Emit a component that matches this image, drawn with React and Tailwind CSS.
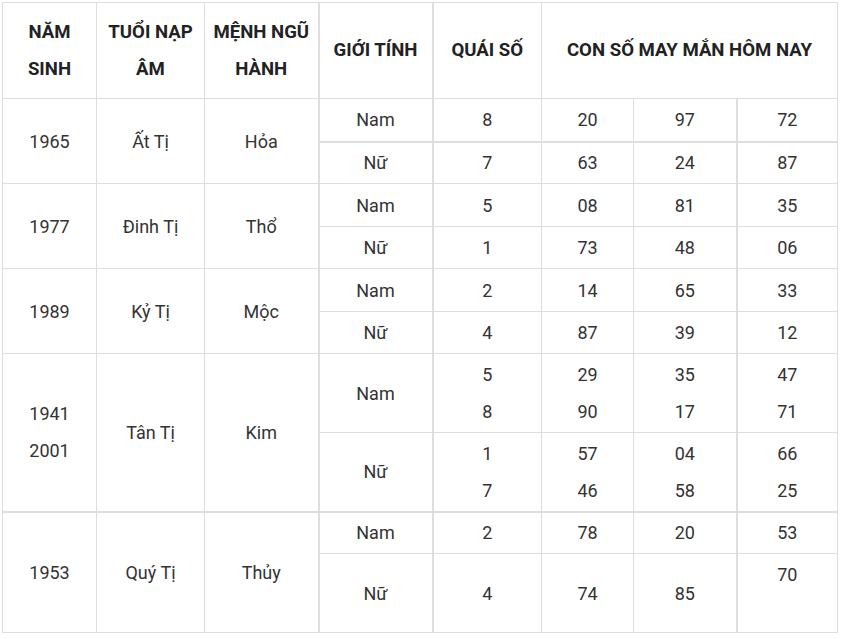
import React from 'react';

const rows = [
  { year: ['1965'], tuoi: 'Ất Tị', menh: 'Hỏa', sub: [
    { g: 'Nam', q: ['8'], n: [['20'], ['97'], ['72']], h: 'h-[43px]', thick: true },
    { g: 'Nữ', q: ['7'], n: [['63'], ['24'], ['87']], h: 'h-[42px]' },
  ] },
  { year: ['1977'], tuoi: 'Đinh Tị', menh: 'Thổ', sub: [
    { g: 'Nam', q: ['5'], n: [['08'], ['81'], ['35']], h: 'h-[43px]' },
    { g: 'Nữ', q: ['1'], n: [['73'], ['48'], ['06']], h: 'h-[42px]' },
  ] },
  { year: ['1989'], tuoi: 'Kỷ Tị', menh: 'Mộc', sub: [
    { g: 'Nam', q: ['2'], n: [['14'], ['65'], ['33']], h: 'h-[43px]' },
    { g: 'Nữ', q: ['4'], n: [['87'], ['39'], ['12']], h: 'h-[42px]' },
  ] },
  { year: ['1941', '2001'], tuoi: 'Tân Tị', menh: 'Kim', thickBottom: true, sub: [
    { g: 'Nam', q: ['5', '8'], n: [['29', '90'], ['35', '17'], ['47', '71']], h: 'h-[79px]' },
    { g: 'Nữ', q: ['1', '7'], n: [['57', '46'], ['04', '58'], ['66', '25']], h: 'h-[79px]' },
  ] },
  { year: ['1953'], tuoi: 'Quý Tị', menh: 'Thủy', sub: [
    { g: 'Nam', q: ['2'], n: [['78'], ['20'], ['53']], h: 'h-[42px]' },
    { g: 'Nữ', q: ['4'], n: [['74'], ['85'], ['70', '\u00a0']], h: 'h-[79px]' },
  ] },
];

const Lines = ({ items }) => (
  <>
    {items.map((t, i) => (
      <React.Fragment key={i}>
        {i > 0 && <br />}
        {t}
      </React.Fragment>
    ))}
  </>
);

const td = 'border border-[#dedede] text-center align-middle p-0 leading-[37px]';
const th = `${td} font-bold text-[18.6px]`;

export default function App() {
  return (
    <div className="bg-white w-[843px] h-[639px] pt-[2px] pl-[2px]" style={{ fontFamily: 'Roboto, "Noto Sans", sans-serif' }}>
      <table className="table-fixed border-collapse w-[835px] text-[18px] text-[#333]">
        <colgroup>
          <col className="w-[94px]" />
          <col className="w-[108px]" />
          <col className="w-[114px]" />
          <col className="w-[114px]" />
          <col className="w-[109px]" />
          <col className="w-[92px]" />
          <col className="w-[103px]" />
          <col className="w-[101px]" />
        </colgroup>
        <thead>
          <tr className="h-[96px] text-[#222]">
            <th className={th}>NĂM<br />SINH</th>
            <th className={th}>TUỔI NẠP<br />ÂM</th>
            <th className={`${th} border-r-2`}>MỆNH NGŨ<br />HÀNH</th>
            <th className={`${th} border-r-2`}>GIỚI TÍNH</th>
            <th className={th}>QUÁI SỐ</th>
            <th className={th} colSpan={3}>CON SỐ MAY MẮN HÔM NAY</th>
          </tr>
        </thead>
        <tbody>
          {rows.map((r) =>
            r.sub.map((s, i) => (
              <tr key={r.year[0] + s.g} className={`${s.h} ${r.thickBottom && i === 1 ? 'border-b-2 border-[#dedede]' : ''}`}>
                {i === 0 && (
                  <>
                    <td className={td} rowSpan={2}><Lines items={r.year} /></td>
                    <td className={td} rowSpan={2}>{r.tuoi}</td>
                    <td className={`${td} border-r-2`} rowSpan={2}>{r.menh}</td>
                  </>
                )}
                <td className={`${td} border-r-2 ${s.thick ? 'border-b-2' : ''}`}>{s.g}</td>
                <td className={`${td} ${s.thick ? 'border-b-2' : ''}`}><Lines items={s.q} /></td>
                <td className={`${td} ${s.thick ? 'border-b-2' : ''}`}><Lines items={s.n[0]} /></td>
                <td className={`${td} border-r-2 ${s.thick ? 'border-b-2' : ''}`}><Lines items={s.n[1]} /></td>
                <td className={`${td} ${s.thick ? 'border-b-2' : ''}`}><Lines items={s.n[2]} /></td>
              </tr>
            ))
          )}
        </tbody>
      </table>
    </div>
  );
}
